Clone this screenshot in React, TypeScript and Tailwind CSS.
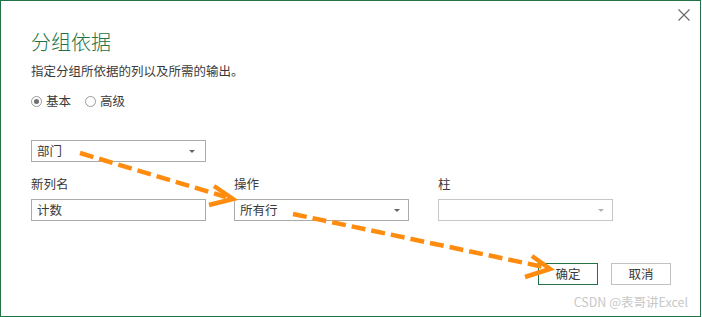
import React from "react";

const FONT = { fontFamily: '"Microsoft YaHei", "Noto Sans CJK SC", "Noto Sans", sans-serif' };

function Caret({ light }: { light?: boolean }) {
  return (
    <svg width="6" height="3" viewBox="0 0 6 3" className="shrink-0">
      <path d="M0 0 L6 0 L3 3 Z" fill={light ? "#b4b4b4" : "#666"} />
    </svg>
  );
}

function Radio({ checked, label }: { checked?: boolean; label: string }) {
  return (
    <div className="flex items-center gap-[4px]">
      <span className="w-[11px] h-[11px] rounded-full border border-[#9a9a9a] flex items-center justify-center bg-white">
        {checked && <span className="w-[5px] h-[5px] rounded-full bg-[#707070]" />}
      </span>
      <span className="text-[12.5px] text-[#3a3a3a] leading-[16px]">{label}</span>
    </div>
  );
}

export default function App() {
  return (
    <div style={FONT} className="relative w-[701px] h-[317px] bg-white border border-[#217346] overflow-hidden">
      <button className="absolute right-[10px] top-[7px] w-[13px] h-[13px] flex items-center justify-center">
        <svg width="12" height="12" viewBox="0 0 12 12">
          <path d="M0.5 0.5 L11.5 11.5 M11.5 0.5 L0.5 11.5" stroke="#666" strokeWidth="1.1" />
        </svg>
      </button>

      <div className="pl-[30px] pt-[27px] flex flex-col">
        <div className="text-[20px] leading-[28px] font-light text-[#217346]">分组依据</div>
        <div className="mt-[6px] text-[12.5px] leading-[18px] text-[#3a3a3a]">指定分组所依据的列以及所需的输出。</div>
        <div className="mt-[13px] flex items-center gap-[14px] h-[16px]">
          <Radio checked label="基本" />
          <Radio label="高级" />
        </div>

        <div className="mt-[31px] w-[175px] h-[22px] border border-[#ababab] flex items-center justify-between pl-[5px] pr-[10px]">
          <span className="text-[12.5px] text-[#3a3a3a] leading-[16px]">部门</span>
          <Caret />
        </div>

        <div className="mt-[14px] flex">
          <div className="w-[175px] flex flex-col">
            <span className="text-[12.5px] leading-[16px] text-[#3a3a3a]">新列名</span>
            <div className="mt-[7px] h-[22px] border border-[#ababab] flex items-center pl-[5px]">
              <span className="text-[12.5px] text-[#3a3a3a] leading-[16px]">计数</span>
            </div>
          </div>
          <div className="ml-[28px] w-[175px] flex flex-col">
            <span className="text-[12.5px] leading-[16px] text-[#3a3a3a]">操作</span>
            <div className="mt-[7px] h-[22px] border border-[#ababab] flex items-center justify-between pl-[5px] pr-[8px]">
              <span className="text-[12.5px] text-[#3a3a3a] leading-[16px]">所有行</span>
              <Caret />
            </div>
          </div>
          <div className="ml-[29px] w-[175px] flex flex-col">
            <span className="text-[12.5px] leading-[16px] text-[#3a3a3a]">柱</span>
            <div className="mt-[7px] h-[22px] border border-[#c6c6c6] flex items-center justify-end pr-[8px]">
              <Caret light />
            </div>
          </div>
        </div>

        <div className="mt-[42px] flex justify-end gap-[13px] pr-[29px]">
          <button className="w-[60px] h-[22px] border border-[#217346] text-[12.5px] text-[#3a3a3a] leading-[16px] bg-white">确定</button>
          <button className="w-[60px] h-[22px] border border-[#c2c2c2] text-[12.5px] text-[#3a3a3a] leading-[16px] bg-white">取消</button>
        </div>
      </div>

      <div className="absolute right-[12px] bottom-[6px] text-[12.5px] leading-[16px] text-[#c8c8c8]">CSDN @表哥讲Excel</div>

      <svg className="absolute -left-px -top-px pointer-events-none" width="702" height="317" viewBox="0 0 702 317">
        <g stroke="#ff8c0f" strokeWidth="4.5" fill="none" strokeLinecap="butt">
          <line x1="80" y1="153" x2="226" y2="197" strokeDasharray="14 6" />
          <polyline points="214,186 233,199 209,205" strokeLinejoin="miter" />
          <line x1="293" y1="214" x2="544" y2="267" strokeDasharray="14 6" />
          <polyline points="532,256 550,269 525,277" strokeLinejoin="miter" />
        </g>
      </svg>
    </div>
  );
}
